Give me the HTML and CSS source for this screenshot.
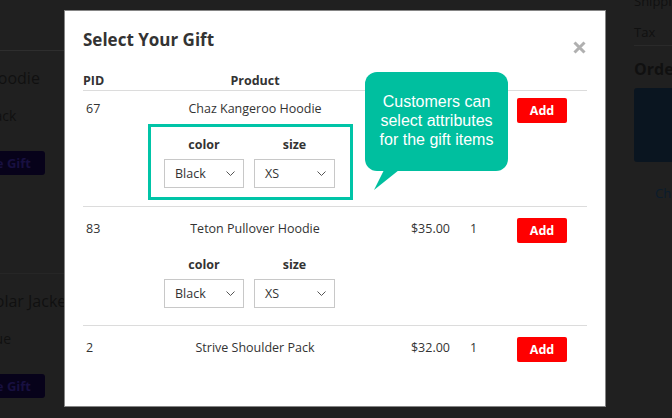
FILE: index.html
```html
<!DOCTYPE html>
<html>
<head>
<meta charset="utf-8">
<link rel="stylesheet" href="styles.css">
</head>
<body>
<div class="page">
  <div class="bg-left">
    <div class="bg-top"></div>
    <div class="bg-item">
      <div class="bg-name">Hoodie</div>
      <div class="bg-attr">Black</div>
      <div class="bg-btn">Choose Gift</div>
    </div>
    <div class="bg-item">
      <div class="bg-name">Solar Jacket</div>
      <div class="bg-attr">Blue</div>
      <div class="bg-btn">Choose Gift</div>
    </div>
  </div>
  <div class="bg-right">
    <div class="bg-line">Shipping</div>
    <div class="bg-line bg-tax">Tax</div>
    <div class="bg-total">Order Total</div>
    <div class="bg-checkout"></div>
    <div class="bg-link">Check Out with Multiple Addresses</div>
  </div>
</div>

<div class="modal">
  <div class="modal-head">
    <h2 class="title">Select Your Gift</h2>
    <svg class="close" width="13" height="13" viewBox="0 0 13 13"><path d="M1.5 1.5 L11.5 11.5 M11.5 1.5 L1.5 11.5" stroke="#b0b0b0" stroke-width="3" fill="none"/></svg>
  </div>
  <div class="thead">
    <div class="pid-h">PID</div>
    <div class="product">Product</div>
    <div class="price">Price</div>
    <div class="qty-h">Qty</div>
    <div></div>
  </div>
  <div class="rows">
    <div class="row">
      <div class="pid">67</div>
      <div class="product">
        <div>Chaz Kangeroo Hoodie</div>
        <div class="attrs highlight">
          <div class="field"><div class="flabel">color</div><div class="select"><span>Black</span><svg width="9" height="5" viewBox="0 0 9 5"><path d="M0.5 0.5 L4.5 4.5 L8.5 0.5" stroke="#555" stroke-width="1" fill="none"/></svg></div></div>
          <div class="field wide"><div class="flabel">size</div><div class="select"><span>XS</span><svg width="9" height="5" viewBox="0 0 9 5"><path d="M0.5 0.5 L4.5 4.5 L8.5 0.5" stroke="#555" stroke-width="1" fill="none"/></svg></div></div>
        </div>
      </div>
      <div class="price">$45.00</div>
      <div class="qty">1</div>
      <div class="action"><span class="add">Add</span></div>
    </div>
    <div class="row">
      <div class="pid">83</div>
      <div class="product">
        <div>Teton Pullover Hoodie</div>
        <div class="attrs">
          <div class="field"><div class="flabel">color</div><div class="select"><span>Black</span><svg width="9" height="5" viewBox="0 0 9 5"><path d="M0.5 0.5 L4.5 4.5 L8.5 0.5" stroke="#555" stroke-width="1" fill="none"/></svg></div></div>
          <div class="field wide"><div class="flabel">size</div><div class="select"><span>XS</span><svg width="9" height="5" viewBox="0 0 9 5"><path d="M0.5 0.5 L4.5 4.5 L8.5 0.5" stroke="#555" stroke-width="1" fill="none"/></svg></div></div>
        </div>
      </div>
      <div class="price">$35.00</div>
      <div class="qty">1</div>
      <div class="action"><span class="add">Add</span></div>
    </div>
    <div class="row">
      <div class="pid">2</div>
      <div class="product"><div>Strive Shoulder Pack</div></div>
      <div class="price">$32.00</div>
      <div class="qty">1</div>
      <div class="action"><span class="add">Add</span></div>
    </div>
  </div>
</div>

<div class="callout">
  Customers can<br>select attributes<br>for the gift items
  <svg class="tail" width="40" height="21" viewBox="0 0 40 21"><polygon points="19,0 34,0 9,20" fill="#00bf9f"/></svg>
</div>
</body>
</html>
```
FILE: styles.css
```css
html, body {
  margin: 0;
  padding: 0;
}
body {
  width: 672px;
  height: 418px;
  overflow: hidden;
  background: #202020;
  font-family: "Open Sans", "Liberation Sans", sans-serif;
  position: relative;
  color: #333;
}

/* background page (dimmed) */
.page {
  display: flex;
  height: 418px;
  color: #101010;
}
.bg-left {
  width: 240px;
  flex-shrink: 0;
  margin-left: -20px;
}
.bg-top {
  height: 50px;
  border-bottom: 1px solid #2e2e2e;
}
.bg-item {
  padding: 15px 0 98px 0;
  border-bottom: 1px solid #262626;
}
.bg-name {
  padding-left: 6px;
  font-size: 16px;
  line-height: 24px;
  white-space: nowrap;
}
.bg-attr {
  margin-top: 16px;
  padding-left: 2px;
  font-size: 14px;
  line-height: 20px;
}
.bg-btn {
  margin-top: 25px;
  width: 150px;
  height: 24px;
  margin-left: -85px;
  box-sizing: border-box;
  background: #07021a;
  color: #181040;
  font-weight: 700;
  font-size: 13px;
  line-height: 24px;
  text-align: right;
  padding-right: 14px;
  border-radius: 3px;
  white-space: nowrap;
}
.bg-right {
  width: 200px;
  flex-shrink: 0;
  margin-left: auto;
  margin-right: -162px;
  margin-top: -9px;
  font-size: 13px;
}
.bg-line {
  line-height: 20px;
}
.bg-tax {
  margin-top: 11px;
  padding-bottom: 3px;
  border-bottom: 1px solid #2a2a2a;
}
.bg-total {
  margin-top: 11px;
  font-size: 16px;
  font-weight: 700;
  line-height: 24px;
}
.bg-checkout {
  margin-top: 7px;
  height: 74px;
  background: #0a1520;
  border-radius: 3px;
}
.bg-link {
  margin-top: 21px;
  padding-left: 21px;
  line-height: 20px;
  color: #0b1c2c;
  white-space: nowrap;
}

/* modal */
.modal {
  position: absolute;
  left: 64px;
  top: 10px;
  width: 542px;
  height: 397px;
  box-sizing: border-box;
  border: 1px solid #858585;
  background: #fff;
  padding: 17px 18px 0 18px;
  overflow: hidden;
}
.modal-head {
  display: flex;
  justify-content: space-between;
  align-items: flex-start;
  height: 23px;
}
.title {
  margin: 0;
  font-size: 17px;
  font-weight: 700;
  line-height: 23px;
  color: #333;
}
.close {
  margin-top: 13px;
  margin-right: 1px;
}
.thead, .row {
  display: grid;
  grid-template-columns: 70px 204px 100px 50px 80px;
  font-size: 12.5px;
  line-height: 18px;
}
.thead {
  margin-top: 21px;
  font-weight: 700;
  border-bottom: 1px solid #dcdcdc;
}
.row {
  padding: 13px 0 8px 0;
  border-bottom: 1px solid #dcdcdc;
}
.rows .row:first-child {
  padding: 9px 0 9px 0;
}
.rows .row:last-child {
  border-bottom: none;
}
.pid {
  padding-left: 3px;
}
.product {
  text-align: center;
}
.price {
  text-align: right;
  padding-right: 7px;
}
.qty {
  padding-left: 13px;
}
.qty-h {
  padding-left: 4px;
}
.action {
  padding-left: 10px;
}
.add {
  display: block;
  width: 50px;
  height: 25px;
  margin-top: -2px;
  background: #ff0000;
  color: #fff;
  font-weight: 700;
  font-size: 12.5px;
  line-height: 25px;
  text-align: center;
  border-radius: 2px;
}
.attrs {
  display: flex;
  gap: 10px;
  width: 199px;
  box-sizing: border-box;
  margin: 9px 0 0 -2px;
  padding: 9px 15px 9px 13px;
}
.highlight {
  outline: 3px solid #00c4a7;
}
.field {
  width: 80px;
  display: flex;
  flex-direction: column;
  gap: 5px;
}
.field.wide {
  width: 81px;
}
.flabel {
  font-weight: 700;
  text-align: center;
}
.select {
  height: 29px;
  box-sizing: border-box;
  border: 1px solid #c8c8c8;
  display: flex;
  align-items: center;
  justify-content: space-between;
  padding: 0 8px 0 10px;
  text-align: left;
}

/* annotation callout */
.callout {
  position: absolute;
  left: 365px;
  top: 72px;
  width: 143px;
  height: 99px;
  box-sizing: border-box;
  padding-top: 20px;
  background: #00bf9f;
  border-radius: 12px;
  color: #fff;
  font-family: "Liberation Sans", Arial, sans-serif;
  font-size: 16px;
  line-height: 19px;
  text-align: center;
}
.tail {
  position: absolute;
  left: 0;
  top: 98px;
}
```
